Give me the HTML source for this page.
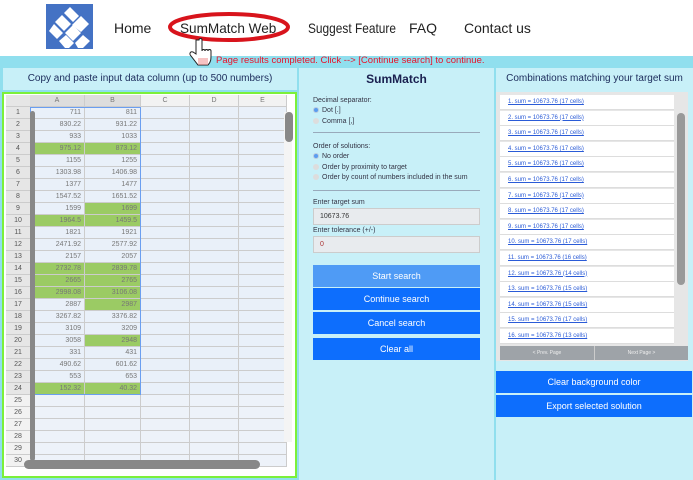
<!DOCTYPE html>
<html><head><meta charset="utf-8"><style>
*{box-sizing:border-box;margin:0;padding:0}
body{width:693px;height:480px;overflow:hidden;background:#fff;font-family:"Liberation Sans",sans-serif;position:relative}
.abs{position:absolute}
.nav{position:absolute;top:20px;font-size:14px;color:#222;white-space:nowrap;transform-origin:0 0}
.band{position:absolute;left:0;top:56px;width:693px;height:424px;background:#90dfee}
.ph{position:absolute;top:68px;height:22px;background:#c8f0f8;font-size:10px;color:#1a2a5a;text-align:center;line-height:22px}
.grid{position:absolute;left:2px;top:92px;width:295px;height:386px;border:2px solid #7cf03a;background:#fff;overflow:hidden}
.cell{position:absolute;height:12px;font-size:7px;color:#777;text-align:right;padding-right:3px;line-height:12px;border-right:1px solid #ccc;border-bottom:1px solid #ccc}
.rn{position:absolute;left:2px;width:24px;height:12px;font-size:7px;color:#555;text-align:center;line-height:12px;background:#e6e6e6;border-bottom:1px solid #ccc}
.mid{position:absolute;font-size:7px;color:#334}
.btn{position:absolute;left:313px;width:167px;height:22px;background:#0d6efd;color:#fff;font-size:9px;text-align:center;line-height:22px}
.item{position:absolute;left:500px;width:174px;height:15px;background:#fff;border-bottom:1px solid #ddd;font-size:6px;color:#2a5bd7;padding-left:8px;line-height:15px}
.item span{text-decoration:underline}
.rb{position:absolute;left:496px;width:196px;height:22px;background:#0d6efd;color:#fff;font-size:9px;text-align:center;line-height:22px}
.radio{display:inline-block;width:6px;height:6px;border-radius:50%;background:#ddd;margin-right:3px;vertical-align:-1px}
.radio.on{background:#5a9cf0;border:1px solid #bcd}
</style></head><body>
<svg class="abs" style="left:46px;top:4px" width="47" height="45" viewBox="0 0 47 45">
<rect width="47" height="45" fill="#4472c4"/>
<polygon points="24,3 33,12 27,18 18,9" fill="#fff"/>
<polygon points="16,11 25,20 18,27 9,18" fill="#fff"/>
<polygon points="26,21 35,12 43,20 35,28" fill="#fff"/>
<polygon points="8,20 17,29 11,35 3,27" fill="#fff"/>
<polygon points="19,29 27,21 35,29 27,37" fill="#fff"/>
<polygon points="29,39 37,31 44,37 37,44 32,44" fill="#fff"/>
<polygon points="13,37 20,31 28,39 23,44 19,44" fill="#fff"/>
</svg>
<div class="nav" style="left:114px">Home</div>
<div class="nav" style="left:180px;transform:scaleX(.97)">SumMatch Web</div>
<svg class="abs" style="left:165px;top:6px" width="128" height="40"><ellipse cx="64" cy="21" rx="59" ry="13" fill="none" stroke="#d8141c" stroke-width="4"/></svg>
<div class="nav" style="left:308px;transform:scaleX(.85)">Suggest Feature</div>
<div class="nav" style="left:409px">FAQ</div>
<div class="nav" style="left:464px">Contact us</div>
<div class="band"></div>
<svg class="abs" style="left:188px;top:38px" width="26" height="32"><path d="M8 2 v14 l-3 -2 c-3 -1 -4 2 -2 4 l7 9 h10 c3 -3 3 -6 3 -10 v-4 c0 -2 -3 -2 -3 0 c0 -2 -3 -2 -3 0 c0 -2 -3 -2 -3 0 v-11 c0 -2 -3 -2 -3 0z" fill="#fff" stroke="#222" stroke-width="1"/><path d="M10 20 h10 v7 h-10z" fill="#e88" opacity=".5"/></svg>
<div class="abs" style="left:216px;top:55px;font-size:9.5px;color:#e8132a">Page results completed. Click --&gt; [Continue search] to continue.</div>
<div class="ph" style="left:3px;width:294px">Copy and paste input data column (up to 500 numbers)</div>
<div class="ph" style="left:299px;width:195px;font-size:12px;font-weight:bold;color:#1a2050">SumMatch</div>
<div class="ph" style="left:496px;width:197px">Combinations matching your target sum</div>
<div class="abs" style="left:299px;top:90px;width:195px;height:390px;background:#c8f0f8"></div>
<div class="abs" style="left:496px;top:90px;width:197px;height:390px;background:#c8f0f8"></div>
<div class="grid" id="g"></div>
<div class="mid" style="left:313px;top:97px">Decimal separator:</div>
<div class="mid" style="left:313px;top:107px"><span class="radio on"></span>Dot [.]</div>
<div class="mid" style="left:313px;top:118px"><span class="radio"></span>Comma [,]</div>
<div class="abs" style="left:313px;top:132px;width:167px;height:1px;background:#9ab"></div>
<div class="mid" style="left:313px;top:143px">Order of solutions:</div>
<div class="mid" style="left:313px;top:153px"><span class="radio on"></span>No order</div>
<div class="mid" style="left:313px;top:164px"><span class="radio"></span>Order by proximity to target</div>
<div class="mid" style="left:313px;top:174px"><span class="radio"></span>Order by count of numbers included in the sum</div>
<div class="abs" style="left:313px;top:190px;width:167px;height:1px;background:#9ab"></div>
<div class="mid" style="left:313px;top:199px">Enter target sum</div>
<div class="abs" style="left:313px;top:208px;width:167px;height:17px;background:#e8ebee;border:1px solid #ccc;font-size:7px;padding-left:6px;line-height:15px;color:#333">10673.76</div>
<div class="mid" style="left:313px;top:227px">Enter tolerance (+/-)</div>
<div class="abs" style="left:313px;top:236px;width:167px;height:17px;background:#e8ebee;border:1px solid #ccc;font-size:7px;padding-left:6px;line-height:15px;color:#a33">0</div>
<div class="btn" style="top:265px;background:#4f9bf5">Start search</div>
<div class="btn" style="top:288px">Continue search</div>
<div class="btn" style="top:312px">Cancel search</div>
<div class="btn" style="top:338px">Clear all</div>
<div class="abs" style="left:496px;top:92px;width:192px;height:269px;background:#e6e6e6"></div>
<div id="r"></div>
<div class="abs" style="left:677px;top:113px;width:8px;height:172px;background:#999;border-radius:4px"></div>
<div class="abs" style="left:500px;top:346px;width:94px;height:14px;background:#9ea3a8;color:#eee;font-size:5px;text-align:center;line-height:14px">&lt; Prev. Page</div>
<div class="abs" style="left:594px;top:346px;width:94px;height:14px;background:#9ea3a8;color:#eee;font-size:5px;text-align:center;line-height:14px;border-left:1px solid #ccc">Next Page &gt;</div>
<div class="rb" style="top:371px">Clear background color</div>
<div class="rb" style="top:395px">Export selected solution</div>
<script>
var d=[[711,811],["830.22","931.22"],[933,1033],["975.12","873.12"],[1155,1255],["1303.98","1406.98"],[1377,1477],["1547.52","1651.52"],[1599,1699],["1964.5","1459.5"],[1821,1921],["2471.92","2577.92"],[2157,2057],["2732.78","2839.78"],[2665,2765],["2998.08","3106.08"],[2887,2987],["3267.82","3376.82"],[3109,3209],[3058,2948],[331,431],["490.62","601.62"],[553,653],["152.32","40.32"]];
var gA={4:1,10:1,14:1,15:1,16:1,24:1},gB={4:1,9:1,10:1,14:1,15:1,16:1,17:1,20:1,24:1};
var cols=[[26,55],[81,56],[137,49],[186,49],[235,48]],h='';
h+='<div class="rn" style="top:1px;height:12px"></div>';
['A','B','C','D','E'].forEach(function(c,i){h+='<div class="cell" style="left:'+cols[i][0]+'px;top:1px;width:'+cols[i][1]+'px;background:'+(i<2?'#ddd':'#f2f2f2')+';text-align:center;padding:0">'+c+'</div>'});
for(var r=1;r<=30;r++){var t=1+r*12;h+='<div class="rn" style="top:'+t+'px;'+(r>24?'background:#f2f2f2':'')+'">'+r+'</div>';
for(var i=0;i<5;i++){var bg=r>24?'#edf2f9':'#e9f0f9',v='';if(r<=24&&i<2){v=d[r-1][i];if((i==0&&gA[r])||(i==1&&gB[r]))bg='#9bcb64'}
h+='<div class="cell" style="left:'+cols[i][0]+'px;top:'+t+'px;width:'+cols[i][1]+'px;background:'+bg+'">'+v+'</div>'}}
h+='<div class="abs" style="left:26px;top:13px;width:111px;height:288px;border:1px solid #6a9ef0"></div>';
h+='<div class="abs" style="left:280px;top:18px;width:8px;height:330px;background:#f4f4f4"></div><div class="abs" style="left:281px;top:18px;width:8px;height:30px;background:#888;border-radius:4px"></div>';
h+='<div class="abs" style="left:20px;top:366px;width:236px;height:9px;background:#888;border-radius:5px"></div>';
h+='<div class="abs" style="left:26px;top:17px;width:5px;height:350px;background:#888;border-radius:3px"></div>';
document.getElementById('g').innerHTML=h;
var cells=[17,17,17,17,17,17,17,17,17,17,16,14,15,15,17,13],s='';
for(var k=0;k<16;k++){s+='<div class="item" style="top:'+(95+k*15.6)+'px"><span>'+(k+1)+'. sum = 10673.76 ('+cells[k]+' cells)</span></div>'}
document.getElementById('r').innerHTML=s;
</script>
</body></html>
